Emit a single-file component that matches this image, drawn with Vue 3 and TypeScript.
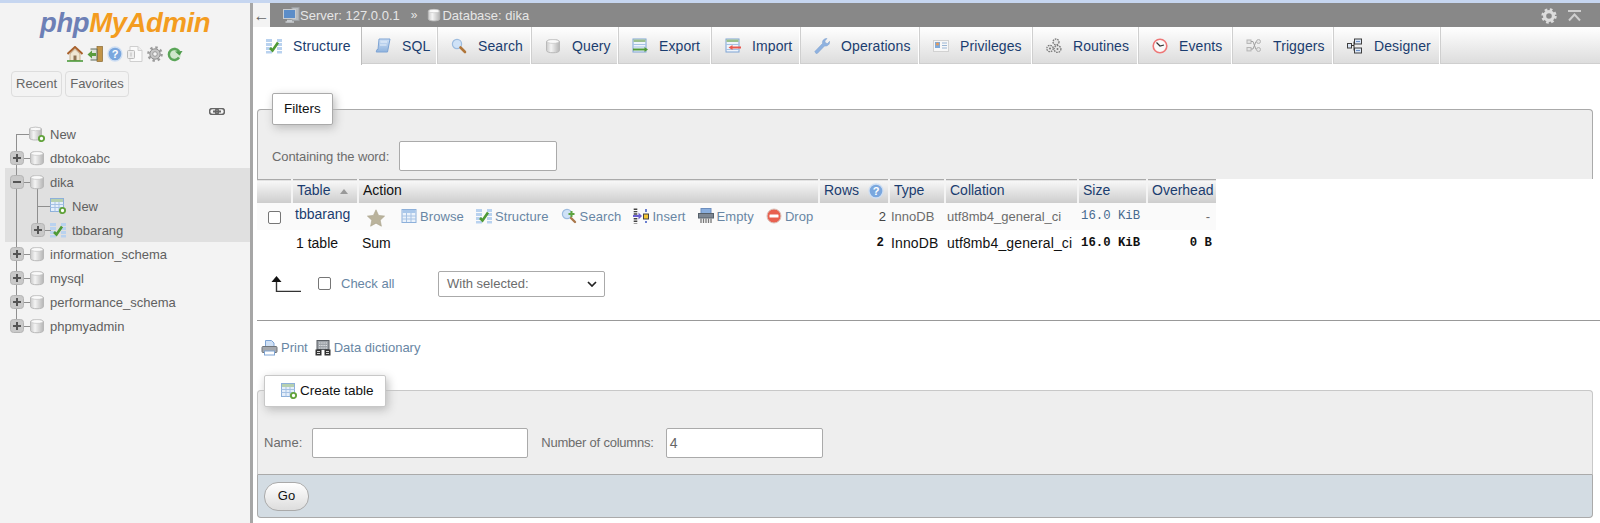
<script setup lang="ts">
interface TreeRow { id: string; label: string; icon: string; box: '' | 'plus' | 'minus'; nested: boolean; top: boolean; last: boolean; cont: boolean; sel: boolean }
const groupA: TreeRow[] = [
  { id: 'n', label: 'New', icon: 'db-new', box: '', nested: false, top: true, last: false, cont: false, sel: false },
  { id: 'a', label: 'dbtokoabc', icon: 'db', box: 'plus', nested: false, top: false, last: false, cont: false, sel: false }
]
const groupB: TreeRow[] = [
  { id: 'd', label: 'dika', icon: 'db', box: 'minus', nested: false, top: false, last: false, cont: false, sel: true },
  { id: 'dn', label: 'New', icon: 'table-new', box: '', nested: true, top: false, last: false, cont: true, sel: true },
  { id: 'dt', label: 'tbbarang', icon: 'structure', box: 'plus', nested: true, top: false, last: true, cont: true, sel: true }
]
const groupC: TreeRow[] = [
  { id: 'i', label: 'information_schema', icon: 'db', box: 'plus', nested: false, top: false, last: false, cont: false, sel: false },
  { id: 'm', label: 'mysql', icon: 'db', box: 'plus', nested: false, top: false, last: false, cont: false, sel: false },
  { id: 'p', label: 'performance_schema', icon: 'db', box: 'plus', nested: false, top: false, last: false, cont: false, sel: false },
  { id: 'h', label: 'phpmyadmin', icon: 'db', box: 'plus', nested: false, top: false, last: true, cont: false, sel: false }
]
const groups = [
  { key: 'a', sel: false, rows: groupA },
  { key: 'b', sel: true, rows: groupB },
  { key: 'c', sel: false, rows: groupC }
]
const tabs = [
  { label: 'Structure', icon: 'structure', active: true, w: 109 },
  { label: 'SQL', icon: 'sql', active: false, w: 76 },
  { label: 'Search', icon: 'search', active: false, w: 94 },
  { label: 'Query', icon: 'db', active: false, w: 87 },
  { label: 'Export', icon: 'export', active: false, w: 93 },
  { label: 'Import', icon: 'import', active: false, w: 89 },
  { label: 'Operations', icon: 'wrench', active: false, w: 119 },
  { label: 'Privileges', icon: 'card', active: false, w: 113 },
  { label: 'Routines', icon: 'gears', active: false, w: 106 },
  { label: 'Events', icon: 'clock', active: false, w: 94 },
  { label: 'Triggers', icon: 'nodes', active: false, w: 101 },
  { label: 'Designer', icon: 'designer', active: false, w: 107 }
]
const actions = [
  { label: 'Browse', icon: 'browse' },
  { label: 'Structure', icon: 'structure' },
  { label: 'Search', icon: 'search-plus' },
  { label: 'Insert', icon: 'insert' },
  { label: 'Empty', icon: 'shred' },
  { label: 'Drop', icon: 'drop' }
]
const navIcons = ['home', 'door', 'help', 'doc', 'gear', 'reload']
</script>

<template>
  <div class="page">
    <svg class="defs" width="0" height="0" aria-hidden="true">
      <defs>
        <linearGradient id="gDb" x1="0" x2="1" y1="0" y2="0"><stop offset="0" stop-color="#c9c9c9" /><stop offset=".35" stop-color="#f4f4f4" /><stop offset="1" stop-color="#b5b5b5" /></linearGradient>
        <linearGradient id="gBlue" x1="0" x2="0" y1="0" y2="1"><stop offset="0" stop-color="#cfe0f5" /><stop offset="1" stop-color="#8fb3de" /></linearGradient>
        <symbol id="db" viewBox="0 0 16 16"><path d="M1.5 3.5C1.5 1 14.5 1 14.5 3.5V12.5C14.5 15.5 1.5 15.5 1.5 12.5Z" fill="url(#gDb)" stroke="#b9b9b9" /><ellipse cx="8" cy="3.5" rx="6" ry="1.9" fill="#fafafa" stroke="#c4c4c4" stroke-width=".7" /></symbol>
        <symbol id="db-new" viewBox="0 0 16 16"><path d="M.5 3C.5 .7 12.5 .7 12.5 3V12C12.5 14.7 .5 14.7 .5 12Z" fill="url(#gDb)" stroke="#b9b9b9" /><ellipse cx="6.5" cy="3" rx="5.5" ry="1.7" fill="#fafafa" stroke="#c4c4c4" stroke-width=".7" /><circle cx="12.5" cy="12.5" r="2.6" fill="#fff" stroke="#62a33d" stroke-width="1.9" /></symbol>
        <symbol id="browse" viewBox="0 0 16 16"><rect x="1" y="1.5" width="14" height="13" fill="#eaf2fb" stroke="#8db0da" /><rect x="1.5" y="2" width="13" height="3" fill="#a9c7ea" /><path d="M1 8H15M1 11H15M5.5 5V14M10 5V14" stroke="#a6c2e4" fill="none" /></symbol>
        <symbol id="table-new" viewBox="0 0 16 16"><rect x=".5" y=".5" width="13" height="13" fill="#e4eefa" stroke="#8db0da" /><rect x="1" y="1" width="12" height="3" fill="#b6d0b0" /><path d="M.5 6.5H13.5M.5 9.5H13.5M5 4V13.5M9 4V13.5" stroke="#a6c2e4" fill="none" /><circle cx="12.5" cy="12.5" r="2.6" fill="#fff" stroke="#62a33d" stroke-width="1.9" /></symbol>
        <symbol id="structure" viewBox="0 0 16 16"><g fill="#b9d2ef"><rect x="0" y="1" width="6" height="3" /><rect x="0" y="5" width="6" height="3" /><rect x="0" y="9" width="6" height="3" /><rect x="0" y="13" width="6" height="2.5" /><rect x="11" y="1" width="5" height="3" /><rect x="11" y="5" width="5" height="3" /><rect x="11" y="9" width="5" height="3" /><rect x="11" y="13" width="5" height="2.5" /></g><path d="M4 10L6.5 12.5L12 4.5" fill="none" stroke="#4f9a36" stroke-width="2.6" /></symbol>
        <symbol id="sql" viewBox="0 0 16 16"><path d="M4 1H15L12.5 14H1.2L2 11.5H3Z" fill="url(#gBlue)" stroke="#7ea4d4" /><path d="M5.5 4H12M5 7H11.5" stroke="#e7f0fb" /></symbol>
        <symbol id="search" viewBox="0 0 16 16"><circle cx="6" cy="6" r="4.6" fill="#cfe2f7" stroke="#9dbcdf" stroke-width="1.2" /><path d="M9.5 9.5L14 14" stroke="#b0763a" stroke-width="2.6" stroke-linecap="round" /></symbol>
        <symbol id="search-plus" viewBox="0 0 16 16"><circle cx="6" cy="6" r="4.6" fill="#cfe2f7" stroke="#9dbcdf" stroke-width="1.2" /><path d="M10 10L14 14" stroke="#a9774a" stroke-width="2.4" stroke-linecap="round" /><path d="M10.5 3V9M7.5 6H13.5" stroke="#5da340" stroke-width="2" /></symbol>
        <symbol id="export" viewBox="0 0 16 16"><rect x="1" y="1" width="13" height="13" fill="#eef4fb" stroke="#7ea4d4" /><rect x="1.5" y="1.5" width="12" height="2.5" fill="#9bc08d" /><path d="M1 6.5H14M1 9H14" stroke="#a6c2e4" /><path d="M1 11.5H13" stroke="#4f9a36" stroke-width="2" /><path d="M12.5 9L16 11.5L12.5 14Z" fill="#4f9a36" /></symbol>
        <symbol id="import" viewBox="0 0 16 16"><rect x="1" y="1" width="13" height="13" fill="#eef4fb" stroke="#7ea4d4" /><rect x="1.5" y="1.5" width="12" height="2.5" fill="#9bc08d" /><path d="M1 6.5H14M1 11.5H14" stroke="#a6c2e4" /><path d="M7 9.5H16" stroke="#e8584f" stroke-width="2" /><path d="M7.5 7L3.5 9.5L7.5 12Z" fill="#e8584f" /></symbol>
        <symbol id="wrench" viewBox="0 0 16 16"><path d="M2 15.5L.8 13.5L8.5 5.5C8 3 9.5.5 13 .5L10.8 3L11.5 5L13.5 5.5L15.7 3.3C16 6.5 13.5 8.5 10.5 8L3.5 15.3Z" fill="#8fb2e0" stroke="#7d9fcd" stroke-width=".5" /></symbol>
        <symbol id="card" viewBox="0 0 16 16"><rect x=".5" y="2.5" width="15" height="11" fill="#f7f7f7" stroke="#d2d2d2" /><rect x="2" y="4" width="5" height="6" fill="#7fa9d9" /><circle cx="4.5" cy="6" r="1.6" fill="#e39a5c" /><path d="M9 5H14M9 7.5H14M9 10H14" stroke="#9ab5d4" /></symbol>
        <symbol id="gears" viewBox="0 0 16 16"><g fill="#e6e6e6" stroke="#777" stroke-width="1.3" stroke-dasharray="1.6 .9"><circle cx="10" cy="4" r="3" /><circle cx="4" cy="10.5" r="3.2" /><circle cx="11.5" cy="11" r="3.4" /></g><circle cx="11.5" cy="11" r="1" fill="#777" /><circle cx="4" cy="10.5" r="1" fill="#777" /></symbol>
        <symbol id="clock" viewBox="0 0 16 16"><circle cx="8" cy="8" r="6.8" fill="#fafafa" stroke="#e77" stroke-width="1.6" /><path d="M4.5 4.5L8 8L12 7" fill="none" stroke="#333" stroke-width="1.2" /></symbol>
        <symbol id="nodes" viewBox="0 0 16 16"><g fill="#e4e4e4" stroke="#b4b4b4"><rect x="1" y="2" width="4" height="3.4" /><rect x="1" y="9.5" width="4" height="3.4" /><circle cx="12.5" cy="3.5" r="2" /><circle cx="12.5" cy="11.5" r="2" /></g><path d="M5 3.5H7L10 11.5M5 11H7L10 3.5" fill="none" stroke="#a0a0a0" /></symbol>
        <symbol id="designer" viewBox="0 0 16 16"><g fill="#dbe6f5" stroke="#3f3f3f"><rect x="7.5" y="1" width="7" height="5" /><rect x="7.5" y="10" width="7" height="5" /><rect x=".5" y="5.5" width="4" height="4.5" /></g><path d="M4.5 7.5H7V3.5M7 7.5V12.5" fill="none" stroke="#333" /><path d="M9 3.5H13M9 12.5H13" stroke="#6b8fc6" /></symbol>
        <symbol id="insert" viewBox="0 0 16 16"><path d="M2.5 .5V15.5" stroke="#444" stroke-width="3.6" stroke-dasharray="1.4 1" /><path d="M0 8H7" stroke="#6a5fd0" stroke-width="2" /><path d="M5.5 4.5L9 8L5.5 11.5Z" fill="#6a5fd0" /><rect x="10.5" y="6" width="5" height="5" fill="#f4c534" stroke="#444" /><path d="M13 1V4M13 13V15" stroke="#6a7fd0" stroke-width="2" /></symbol>
        <symbol id="shred" viewBox="0 0 16 16"><rect x="3" y=".5" width="10" height="6" fill="#89aede" stroke="#6c8dbd" /><rect x=".5" y="5.5" width="15" height="4.5" fill="#7d8793" stroke="#56606a" /><path d="M3 10.5V15M5.5 10.5V15M8 10.5V15M10.5 10.5V15M13 10.5V15" stroke="#777" stroke-width="1.3" /></symbol>
        <symbol id="drop" viewBox="0 0 16 16"><circle cx="8" cy="8" r="7" fill="#e8604f" stroke="#d9c3bb" stroke-width="1" /><rect x="3.5" y="6.5" width="9" height="3" rx=".6" fill="#fff" /></symbol>
        <symbol id="star" viewBox="0 0 18 18"><path d="M9 .8L11.6 6.4L17.6 7.1L13.2 11.2L14.4 17.2L9 14.2L3.6 17.2L4.8 11.2L.4 7.1L6.4 6.4Z" fill="#bab39c" stroke="#a9a28b" stroke-width=".6" /></symbol>
        <symbol id="print" viewBox="0 0 16 16"><path d="M4 .5H10L12.5 3V7H4Z" fill="#cfe0f5" stroke="#7ea4d4" /><rect x=".5" y="6.5" width="15" height="6" rx="1" fill="#a5a8ad" stroke="#70757a" /><rect x="3" y="11" width="10" height="4" fill="#fff" stroke="#7ea4d4" /></symbol>
        <symbol id="dict" viewBox="0 0 16 16"><rect x="2" y=".5" width="12" height="9" fill="#9ea3a9" stroke="#5a5f65" /><path d="M4 3H12M4 5.5H12M4 8H12" stroke="#dfe2e5" stroke-dasharray="1.4 .8" /><rect x=".5" y="9.5" width="6" height="6" fill="#333" /><rect x="9.5" y="9.5" width="6" height="6" fill="#333" /><path d="M2 11.5H5M2 13.5H5M11 11.5H14M11 13.5H14" stroke="#d8d8d8" /></symbol>
        <symbol id="home" viewBox="0 0 16 16"><path d="M.5 8L8 1L15.5 8" fill="none" stroke="#a8612c" stroke-width="2" /><path d="M3 8L8 3.3L13 8V14.5H3Z" fill="#efe6d2" stroke="#b99b6f" stroke-width=".7" /><rect x="6.5" y="9.5" width="3" height="5" fill="#8f7454" /><path d="M0 15H16" stroke="#4c9a3a" stroke-width="1.6" /></symbol>
        <symbol id="door" viewBox="0 0 16 16"><rect x="10" y=".5" width="5.5" height="15" fill="#c29447" stroke="#8b6a32" stroke-width=".7" /><path d="M3.5 3H10V14H3.5" fill="#dfe3dc" stroke="#5f6b5a" /><path d="M4 8.5H9" stroke="#5a9c3f" stroke-width="3" /><path d="M5 4.5L.5 8.5L5 12.5Z" fill="#5a9c3f" /></symbol>
        <symbol id="help" viewBox="0 0 16 16"><circle cx="8" cy="8" r="7" fill="#7aa7de" stroke="#cfdff3" stroke-width="1.3" /><text x="8" y="12" text-anchor="middle" font-family="'Liberation Sans',sans-serif" font-weight="700" font-size="11" fill="#fff">?</text></symbol>
        <symbol id="doc" viewBox="0 0 16 16"><path d="M3 .5H11L15 4.5V15.5H3Z" fill="#fafafa" stroke="#cfcfcf" /><path d="M11 .5V4.5H15" fill="#eee" stroke="#cfcfcf" /><rect x=".5" y="4.5" width="7" height="8" rx="1" fill="#eee" stroke="#bbb" /><path d="M4 6.5V10.5" stroke="#bbb" /></symbol>
        <symbol id="gear" viewBox="0 0 16 16"><circle cx="8" cy="8" r="5.2" fill="#c6c6c6" stroke="#8f8f8f" /><circle cx="8" cy="8" r="6.6" fill="none" stroke="#9a9a9a" stroke-width="2.4" stroke-dasharray="2.4 2.8" /><circle cx="8" cy="8" r="2.3" fill="#f3f3f3" stroke="#999" /></symbol>
        <symbol id="reload" viewBox="0 0 16 16"><circle cx="7.5" cy="8" r="6.6" fill="#cfe6cb" /><path d="M12 5.5A5.5 5.5 0 1 0 12 11.5" fill="none" stroke="#5aa558" stroke-width="2.4" /><path d="M8 5.5L15.5 5L12.5 9.5Z" fill="#4b9a49" /></symbol>
        <symbol id="link" viewBox="0 0 16 7"><rect x=".5" y=".5" width="9" height="6" rx="3" fill="none" stroke="#666" stroke-width="1.6" /><rect x="6.5" y=".5" width="9" height="6" rx="3" fill="none" stroke="#666" stroke-width="1.6" /><path d="M4 3.5H12" stroke="#666" stroke-width="2" /></symbol>
        <symbol id="server" viewBox="0 0 17 16"><rect x="9" y=".5" width="7" height="13" fill="#b8bcc0" stroke="#9da1a5" /><rect x=".5" y="2.5" width="12" height="9" fill="#5c8dc8" stroke="#c8ccd0" /><path d="M4 13.5H9M2.5 15H11" stroke="#c8ccd0" stroke-width="1.4" /></symbol>
        <symbol id="cog-white" viewBox="0 0 16 16"><circle cx="8" cy="8" r="4.4" fill="none" stroke="#dcdcdc" stroke-width="3.2" /><circle cx="8" cy="8" r="6.4" fill="none" stroke="#dcdcdc" stroke-width="2.6" stroke-dasharray="2.6 2.43" /></symbol>
        <symbol id="up-bar" viewBox="0 0 13 12"><path d="M0 1H13" stroke="#cfcfcf" stroke-width="2" /><path d="M1 10.5L6.5 4.5L12 10.5" fill="none" stroke="#cfcfcf" stroke-width="2" /></symbol>
      </defs>
    </svg>

    <div class="strip"></div>
    <div class="shell">
      <aside class="nav">
        <div class="logo"><span class="php">php</span><span class="mya">MyAdmin</span></div>
        <div class="nav-icons">
          <svg v-for="n in navIcons" :key="n" class="i16"><use :href="'#' + n" /></svg>
        </div>
        <div class="nav-btns">
          <span class="nav-btn">Recent</span>
          <span class="nav-btn">Favorites</span>
        </div>
        <div class="link-row"><svg class="link"><use href="#link" /></svg></div>
        <div class="tree">
          <div v-for="g in groups" :key="g.key" :class="{ band: g.sel }">
            <div v-for="r in g.rows" :key="r.id" class="tree-row">
              <svg class="conn" :class="{ wide: r.nested }" :viewBox="r.nested ? '0 0 72 24' : '0 0 50 24'">
                <path v-if="!r.top && !(r.last && !r.nested)" d="M16.5 0V24" class="ln" />
                <path v-else-if="r.top" d="M16.5 12V24" class="ln" />
                <path v-else d="M16.5 0V12" class="ln" />
                <template v-if="r.nested">
                  <path :d="r.last ? 'M37.5 0V12' : 'M37.5 0V24'" class="ln" />
                  <path :d="r.box ? 'M45 12.5H51' : 'M37 12.5H51'" class="ln" />
                  <g v-if="r.box" transform="translate(21 0)">
                    <rect x="10.5" y="5.5" width="13" height="13" rx="3" class="box" />
                    <path d="M13 12H21M17 8V16" class="sign" />
                  </g>
                </template>
                <template v-else>
                  <path d="M16.5 12.5H30" class="ln" />
                  <path v-if="r.box === 'minus'" d="M37.5 12V24" class="ln" />
                  <template v-if="r.box">
                    <rect x="10.5" y="5.5" width="13" height="13" rx="3" class="box" />
                    <path d="M13 12H21" class="sign" />
                    <path v-if="r.box === 'plus'" d="M17 8V16" class="sign" />
                  </template>
                </template>
                <use :href="'#' + r.icon" :x="r.nested ? 50 : 29" y="4" width="16" height="16" />
              </svg>
              <span class="tree-label">{{ r.label }}</span>
            </div>
          </div>
        </div>
      </aside>

      <main class="main">
        <div class="topbar">
          <span class="back">←</span>
          <div class="crumbs">
            <svg class="i-server"><use href="#server" /></svg>
            <span>Server: 127.0.0.1</span>
            <span class="sep">»</span>
            <svg class="i-db"><use href="#db" /></svg>
            <span>Database: dika</span>
          </div>
          <div class="bar-tools">
            <svg class="i16"><use href="#cog-white" /></svg>
            <svg class="i-up"><use href="#up-bar" /></svg>
          </div>
        </div>
        <nav class="tabs">
          <a v-for="t in tabs" :key="t.label" class="tab" :class="{ active: t.active }" :style="{ width: t.w + 'px' }">
            <svg class="i16"><use :href="'#' + t.icon" /></svg>
            <span>{{ t.label }}</span>
          </a>
        </nav>

        <div class="content">
          <fieldset class="fs filters">
            <legend class="lg">Filters</legend>
            <div class="filter-row">
              <label class="lbl">Containing the word:</label>
              <span class="input filter-input"></span>
            </div>
          </fieldset>

          <table class="tbl">
            <colgroup>
              <col class="c0" /><col class="c1" /><col class="c2" /><col class="c3" /><col class="c4" /><col class="c5" /><col class="c6" /><col class="c7" />
            </colgroup>
            <thead>
              <tr>
                <th></th>
                <th class="lnk">Table <span class="sort"></span></th>
                <th>Action</th>
                <th class="lnk rows-h">Rows <svg class="i-help"><use href="#help" /></svg></th>
                <th class="lnk">Type</th>
                <th class="lnk">Collation</th>
                <th class="lnk">Size</th>
                <th class="lnk">Overhead</th>
              </tr>
            </thead>
            <tbody>
              <tr class="row1">
                <td class="cb-cell"><span class="cb"></span></td>
                <td class="tname">tbbarang</td>
                <td>
                  <div class="acts">
                    <svg class="i-star"><use href="#star" /></svg>
                    <span v-for="a in actions" :key="a.label" class="act">
                      <svg class="i16"><use :href="'#' + a.icon" /></svg>{{ a.label }}
                    </span>
                  </div>
                </td>
                <td class="num">2</td>
                <td class="mut">InnoDB</td>
                <td class="mut">utf8mb4_general_ci</td>
                <td class="mono blue">16.0 KiB</td>
                <td class="num mut dash">-</td>
              </tr>
              <tr class="row2">
                <td></td>
                <td>1 table</td>
                <td>Sum</td>
                <td class="num mono">2</td>
                <td class="wider">InnoDB</td>
                <td class="wider">utf8mb4_general_ci</td>
                <td class="mono">16.0 KiB</td>
                <td class="num mono">0 B</td>
              </tr>
            </tbody>
          </table>

          <div class="check-row">
            <svg class="i-arrow" viewBox="0 0 30 16"><path d="M5.5 3V15.5H30" fill="none" stroke="#333" stroke-width="1.4" /><path d="M5.5 0L10.5 6H.5Z" fill="#111" /></svg>
            <span class="cb"></span>
            <span class="check-all">Check all</span>
            <span class="select">With selected:<svg class="chev" viewBox="0 0 10 6"><path d="M1 1L5 5L9 1" fill="none" stroke="#222" stroke-width="1.7" /></svg></span>
          </div>

          <hr class="rule" />

          <div class="print-row">
            <svg class="i-print"><use href="#print" /></svg><span class="plink">Print</span>
            <svg class="i16 dict"><use href="#dict" /></svg><span class="plink">Data dictionary</span>
          </div>

          <fieldset class="fs create">
            <legend class="lg create-lg"><svg class="i16"><use href="#table-new" /></svg>Create table</legend>
            <div class="create-row">
              <label class="lbl">Name:</label>
              <span class="input name-input"></span>
              <label class="lbl cols-lbl">Number of columns:</label>
              <span class="input cols-input">4</span>
            </div>
          </fieldset>
          <div class="foot"><span class="go">Go</span></div>
        </div>
      </main>
    </div>
  </div>
</template>

<style scoped>
.page { width: 1600px; height: 523px; overflow: hidden; font-family: "Liberation Sans", Arial, sans-serif; font-size: 13px; color: #444; background: #fff; }
.defs { position: absolute; }
.strip { height: 3px; background: #c6d6f0; }
.shell { display: flex; height: 520px; }
.i16 { width: 16px; height: 16px; flex: none; }

.nav { width: 250px; flex: none; background: #f3f3f3; border-right: 3px solid #a6a6a6; }
.logo { height: 34px; padding: 3px 0 0 40px; font: italic 700 27.5px/34px "Liberation Sans", sans-serif; letter-spacing: -.4px; white-space: nowrap; }
.php { color: #6d80b6; }
.mya { color: #f39c1f; }
.nav-icons { display: flex; gap: 4px; padding: 6px 0 0 67px; height: 16px; }
.nav-btns { display: flex; gap: 3px; padding: 9px 0 0 11px; }
.nav-btn { height: 24px; padding: 0 4px; line-height: 24px; border: 1px solid #ddd; border-radius: 4px; color: #666; }
.link-row { display: flex; justify-content: flex-end; padding: 11px 25px 0 0; height: 8px; }
.link { width: 16px; height: 7px; }
.tree { padding-top: 6px; }
.band { background: #e0e0e0; margin: -2px 0 0 5px; padding-top: 2px; }
.band .tree-row { margin-left: -5px; }
.tree-row { display: flex; align-items: center; height: 24px; }
.conn { width: 50px; height: 24px; flex: none; overflow: hidden; }
.conn.wide { width: 72px; }
.ln { fill: none; stroke: #8f8f8f; stroke-width: 1; }
.box { fill: #c9c9c9; stroke: #b4b4b4; }
.sign { fill: none; stroke: #555; stroke-width: 2; }
.tree-label { color: #606060; white-space: nowrap; }

.main { flex: 1; min-width: 0; }
.topbar { display: flex; align-items: center; height: 24px; background: #888; color: #e6e6e6; }
.back { width: 17px; height: 24px; background: #f3f3f3; color: #666; text-align: center; line-height: 26px; font-size: 16px; }
.crumbs { display: flex; align-items: center; padding-left: 13px; }
.i-server { width: 17px; height: 16px; }
.sep { margin: 0 11px; font-size: 12px; }
.i-db { width: 14px; height: 14px; margin: 0 1px 0 -1px; }
.bar-tools { margin-left: auto; display: flex; align-items: center; gap: 11px; padding-right: 19px; padding-top: 1px; }
.i-up { width: 13px; height: 12px; }

.tabs { display: flex; height: 37px; background: linear-gradient(#fff, #dcdcdc); box-shadow: inset 0 -1px 0 #cfcfcf; }
.tab { display: flex; align-items: center; gap: 11px; box-sizing: border-box; padding-left: 13px; border-right: 1px solid #cfcfcf; box-shadow: inset -1px 0 0 #fff; color: #1b3d6f; font-size: 14px; letter-spacing: .1px; white-space: nowrap; flex: none; }
.tab.active { background: #fff; height: 38px; box-shadow: none; border-right-color: #bdbdbd; }

.content { padding: 29px 7px 0 4px; }
.fs { margin: 0; min-width: 0; border: 1px solid #aaa; border-radius: 4px 4px 0 0; background: #eee; }
.lg { background: #fff; border: 1px solid #aaa; border-radius: 2px; box-shadow: 2px 3px 10px #bbb; padding: 0 11px; color: #111; height: 32px; line-height: 30px; box-sizing: border-box; font-size: 13.5px; }
.filters { padding: 0 0 8px 14px; border-bottom: 0; }
.filter-row { display: flex; align-items: center; gap: 10px; padding-top: 16px; }
.lbl { color: #6c6c6c; }
.filter-row .lbl { letter-spacing: -.1px; }
.input { display: block; height: 30px; box-sizing: border-box; background: #fff; border: 1px solid #aaa; border-radius: 2px; }
.filter-input { width: 158px; }

.tbl { width: 959px; table-layout: fixed; border-collapse: collapse; border-top: 1px solid #aaa; }
.c0 { width: 35px; } .c1 { width: 66px; } .c2 { width: 461px; } .c3 { width: 70px; } .c4 { width: 56px; } .c5 { width: 133px; } .c6 { width: 69px; } .c7 { width: 69px; }
.tbl th { height: 23px; padding: 0 4px 2px; text-align: left; font-weight: 400; color: #111; background: linear-gradient(#f8f8f8, #ccc); border-right: 2px solid #f4f4f4; font-size: 14px; box-sizing: border-box; white-space: nowrap; }
.tbl th:last-child { border-right: 0; padding-right: 0; }
.lnk.lnk { color: #1b3d6f; }
.sort { display: inline-block; margin-left: 6px; border: 4px solid transparent; border-bottom: 5px solid #999; border-top: 0; vertical-align: 1px; }
.i-help { width: 16px; height: 16px; vertical-align: -4px; margin-left: 5px; }
.tbl td { padding: 0 2px; white-space: nowrap; }
.row1 { height: 27px; background: #fafafa; }
.row2 { height: 25px; color: #111; font-size: 14px; }
.row2 td:nth-child(2), .row2 td:nth-child(3) { padding-left: 4px; }
.row2 td { padding-top: 2px; }
.wider { letter-spacing: .12px; }
.cb-cell { text-align: center; }
.cb { display: inline-block; width: 11px; height: 11px; border: 1px solid #767676; border-radius: 2px; background: #fff; flex: none; vertical-align: middle; }
.tname { color: #1b3d6f; padding-left: 3px !important; padding-bottom: 5px !important; font-size: 14px; }
.acts { display: flex; align-items: center; gap: 12px; padding-left: 7px; letter-spacing: .1px; }
.i-star { width: 18px; height: 18px; margin-top: 3px; margin-right: 4px; }
.act { display: inline-flex; align-items: center; gap: 3px; color: #6886a4; }
.num { text-align: right; padding-right: 3px !important; }
.row2 .num:nth-child(4) { padding-right: 5px !important; }
.mut { color: #6c6c6c; }
.mono { font-family: "Liberation Mono", monospace; font-size: 12.3px; font-weight: 700; }
.row2 .mono { padding-left: 3px; }
.blue { color: #486a90; font-weight: 400; padding-left: 3px !important; }
.dash { padding-right: 6px !important; }
.row2 td.num:last-child { padding-right: 4px !important; }

.check-row { display: flex; align-items: center; height: 26px; margin-top: 16px; padding-left: 14px; }
.i-arrow { width: 30px; height: 16px; margin-right: 17px; }
.check-all { margin-left: 10px; width: 97px; color: #6886a4; }
.select { display: flex; align-items: center; justify-content: space-between; width: 167px; height: 26px; padding: 0 6px 0 8px; box-sizing: border-box; border: 1px solid #aaa; border-radius: 2px; color: #6c6c6c; background: #fff; }
.chev { width: 10px; height: 6px; margin-right: 1px; }
.rule { height: 1px; border: 0; margin: 23px -7px 0 0; background: #999; }
.print-row { display: flex; align-items: center; height: 20px; margin-top: 17px; padding-left: 4px; }
.i-print { width: 17px; height: 16px; margin-right: 3px; }
.plink { color: #6886a4; }
.dict { margin: 0 3px 0 7px; }
.create { margin-top: 17px; padding: 0 0 16px 6px; border-color: #c8c8c8; border-bottom-color: #aaa; }
.create-lg { display: flex; align-items: center; gap: 3px; padding: 0 11px 0 16px; border-color: #c8c8c8; }
.create-row { display: flex; align-items: center; padding-top: 21px; }
.name-input { width: 216px; margin-left: 10px; }
.cols-lbl { margin-left: 13px; letter-spacing: -.22px; }
.cols-input { width: 157px; margin-left: 12px; padding-left: 3px; line-height: 28px; color: #666; font-size: 14px; }
.foot { height: 43px; box-sizing: border-box; padding: 7px 0 0 6px; background: #d3dce3; border: 1px solid #aaa; border-top: 0; border-radius: 0 0 4px 4px; }
.go { display: block; width: 45px; height: 29px; box-sizing: border-box; text-align: center; line-height: 26px; border: 1px solid #aaa; border-radius: 14px; background: linear-gradient(#fff, #ddd); color: #111; }
</style>
